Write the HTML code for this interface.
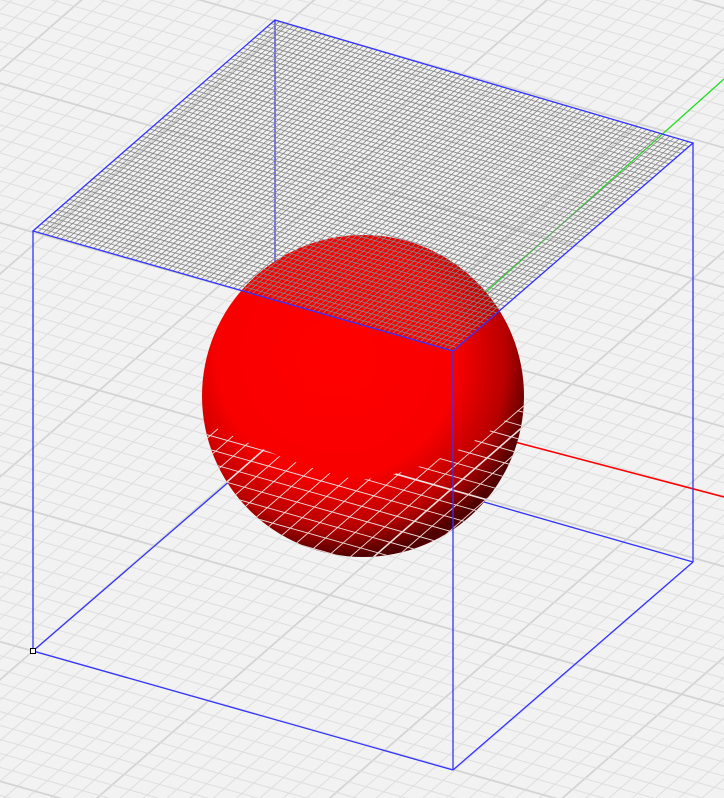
<!DOCTYPE html>
<html><head><meta charset="utf-8"><style>
html,body{margin:0;padding:0;width:724px;height:798px;overflow:hidden;background:#f2f2f2}
svg{display:block;position:absolute;left:0;top:0}
</style></head><body>
<svg id="s" width="724" height="798" viewBox="0 0 724 798" xmlns="http://www.w3.org/2000/svg" overflow="hidden">
<defs>
<radialGradient id="sg" cx="0.42" cy="0.38" r="0.62">
<stop offset="0" stop-color="#ff0000"/>
<stop offset="0.6" stop-color="#f80000"/>
<stop offset="0.85" stop-color="#b80000"/>
<stop offset="1" stop-color="#500000"/>
</radialGradient>
<clipPath id="sc"><circle cx="363" cy="396" r="161"/></clipPath>
<clipPath id="lowc"><path d="M200 420 Q300 470 360 480 Q450 470 530 400 L530 570 L200 570Z"/></clipPath>
<clipPath id="topq"><polygon points="275,20 693,143 453,351 33,231"/></clipPath>
<clipPath id="frame"><rect x="0" y="0" width="724" height="798"/></clipPath>
</defs>
<g clip-path="url(#frame)">
<g id="ground"></g>
<g id="back" stroke="#3333ff" stroke-width="1.3" fill="none">
<line x1="275" y1="20" x2="275" y2="442"/>
<line x1="33" y1="651" x2="275" y2="442"/>
<line x1="693" y1="562" x2="275" y2="442"/>
</g>
<line x1="363" y1="402" x2="724" y2="79" stroke="#22dd22" stroke-width="1.3"/>
<line x1="363" y1="402" x2="724" y2="497" stroke="#ff0000" stroke-width="1.6"/>
<circle cx="363" cy="396" r="161" fill="url(#sg)"/>
<g id="sgrid"></g>
<g id="mesh" clip-path="url(#topq)"></g>
<g stroke="#3333ff" stroke-width="1.3" fill="none">
<polygon points="275,20 693,143 453,351 33,231"/>
<line x1="33" y1="231" x2="33" y2="651"/>
<line x1="693" y1="143" x2="693" y2="562"/>
<line x1="453" y1="351" x2="453" y2="770"/>
<line x1="33" y1="651" x2="453" y2="770"/>
<line x1="453" y1="770" x2="693" y2="562"/>
</g>
<rect x="30.5" y="648.5" width="5" height="5" fill="#fff" stroke="#000" stroke-width="1"/>
</g>
</svg>
<script>
var NS="http://www.w3.org/2000/svg";
function L(g,x1,y1,x2,y2,c,w){var l=document.createElementNS(NS,"line");l.setAttribute("x1",x1.toFixed(1));l.setAttribute("y1",y1.toFixed(1));l.setAttribute("x2",x2.toFixed(1));l.setAttribute("y2",y2.toFixed(1));l.setAttribute("stroke",c);l.setAttribute("stroke-width",w);g.appendChild(l);}
var gg=document.getElementById("ground"), sg=document.getElementById("sgrid");
var ox=33,oy=651,ux=422/24,uy=119/24,vx=242/20,vy=-211/20;
var R=60;
for(var i=-R;i<=R;i++){
 var x0=ox+i*ux,y0=oy+i*uy;
 var maj=(i%10==0);
 L(gg,x0-R*vx,y0-R*vy,x0+R*vx,y0+R*vy,maj?"#d4d4d4":"#dedede",maj?1.8:1);
 L(sg,x0-R*vx,y0-R*vy,x0+R*vx,y0+R*vy,"#f0dede",maj?1.6:0.9);
}
for(var j=-R;j<=R;j++){
 var x0=ox+j*vx,y0=oy+j*vy;
 var maj=(j%10==0);
 L(gg,x0-R*ux,y0-R*uy,x0+R*ux,y0+R*uy,maj?"#d4d4d4":"#dedede",maj?1.8:1);
 L(sg,x0-R*ux,y0-R*uy,x0+R*ux,y0+R*uy,"#f0dede",maj?1.6:0.9);
}
var w1=document.createElementNS(NS,"g");w1.setAttribute("clip-path","url(#lowc)");
var w2=document.createElementNS(NS,"g");w2.setAttribute("clip-path","url(#sc)");
sg.parentNode.insertBefore(w1,sg);w1.appendChild(w2);w2.appendChild(sg);
var m=document.getElementById("mesh");
var A=[275,20],B=[693,143],C=[453,351],D=[33,231];
var N=90,M=60;
for(var i=0;i<=N;i++){var t=i/N;
 L(m,A[0]+(B[0]-A[0])*t,A[1]+(B[1]-A[1])*t,D[0]+(C[0]-D[0])*t,D[1]+(C[1]-D[1])*t,"#858585",0.8);}
for(var j=0;j<=M;j++){var t=j/M;
 L(m,A[0]+(D[0]-A[0])*t,A[1]+(D[1]-A[1])*t,B[0]+(C[0]-B[0])*t,B[1]+(C[1]-B[1])*t,"#858585",0.8);}
</script>
</body></html>
